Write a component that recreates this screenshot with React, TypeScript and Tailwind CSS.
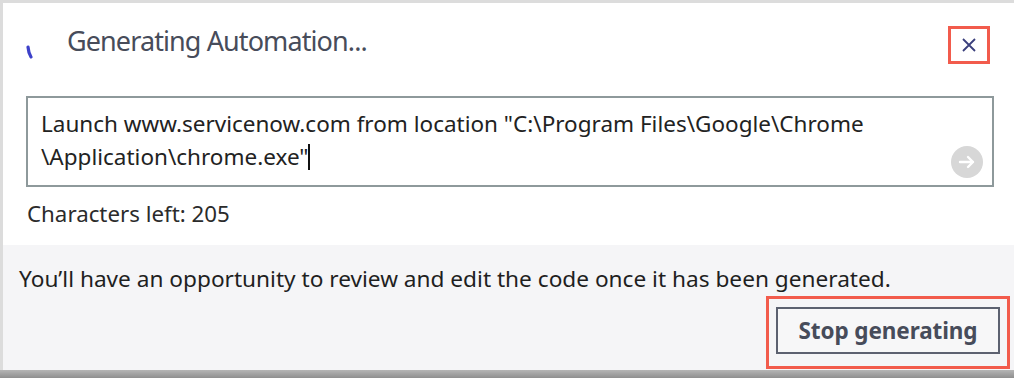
import React from "react";

export default function App() {
  return (
    <div
      className="w-[1014px] h-[378px] bg-white overflow-hidden flex flex-col"
      style={{ fontFamily: '"Noto Sans", "Open Sans", sans-serif' }}
    >
      <div className="flex-1 flex flex-col border-l-[3px] border-t-[3px] border-[#dcdcdc]">
        {/* Header */}
        <div className="h-[77px] flex items-center pl-[23px] pr-[24px]">
          <svg width="8" height="14" viewBox="0 0 8 14" className="mt-[20px]">
            <path d="M2 2 Q2.5 8 5 12" stroke="#3d41c9" strokeWidth="3.2" fill="none" strokeLinecap="round" />
          </svg>
          <div className="ml-[33px] text-[27px] font-normal text-[#474c5a] tracking-[-0.9px] leading-none mb-[2px]">
            Generating Automation...
          </div>
          <div className="ml-auto mt-[6px] w-[42px] h-[38px] border-[3px] border-[#f25b4c] flex items-center justify-center">
            <svg width="16" height="16" viewBox="0 0 16 16">
              <path d="M2 2 L14 14 M14 2 L2 14" stroke="#3a3f7c" strokeWidth="1.8" />
            </svg>
          </div>
        </div>
        {/* Textarea */}
        <div className="mt-[16px] ml-[23px] mr-[20px] h-[91px] border-2 border-[#8e999b] relative pl-[13px] pt-[9px]">
          <div className="text-[22.5px] leading-[33px] text-[#222] whitespace-nowrap">
            Launch www.servicenow.com from location "C:\Program Files\Google\Chrome
            <br />
            \Application\chrome.exe"<span className="inline-block w-[2px] h-[26px] bg-[#111] align-middle -ml-[1px] mb-[4px]"></span>
          </div>
          <div className="absolute right-[9px] bottom-[7px] w-[32px] h-[32px] rounded-full bg-[#d7d7d7] flex items-center justify-center">
            <svg width="20" height="16" viewBox="0 0 20 16">
              <path d="M3 8 H16 M11 3 L16 8 L11 13" stroke="white" strokeWidth="2.4" fill="none" strokeLinecap="round" strokeLinejoin="round" />
            </svg>
          </div>
        </div>
        <div className="mt-[14px] ml-[24px] text-[22.3px] text-[#2b2b2b] leading-[26px]">Characters left: 205</div>
        {/* Footer */}
        <div className="mt-[18px] flex-1 bg-[#f5f5f7] flex flex-col">
          <div className="mt-[20px] ml-[16px] text-[22.65px] text-[#1f1f1f] leading-[28px] whitespace-nowrap">
            You’ll have an opportunity to review and edit the code once it has been generated.
          </div>
          <div className="mt-[3px] flex justify-end pr-[4px]">
            <div className="border-[3px] border-[#f25b4c] px-[7px] pt-[8px] pb-[12px]">
              <div className="w-[224px] h-[47px] border-2 border-[#5c6170] bg-[#f7f7f8] flex items-center justify-center text-[22.5px] font-bold text-[#474c5a] tracking-[-0.1px]">
                Stop generating
              </div>
            </div>
          </div>
        </div>
      </div>
      <div className="h-[8px] bg-gradient-to-b from-[#b5b5b5] to-[#8f8f8f]"></div>
    </div>
  );
}
